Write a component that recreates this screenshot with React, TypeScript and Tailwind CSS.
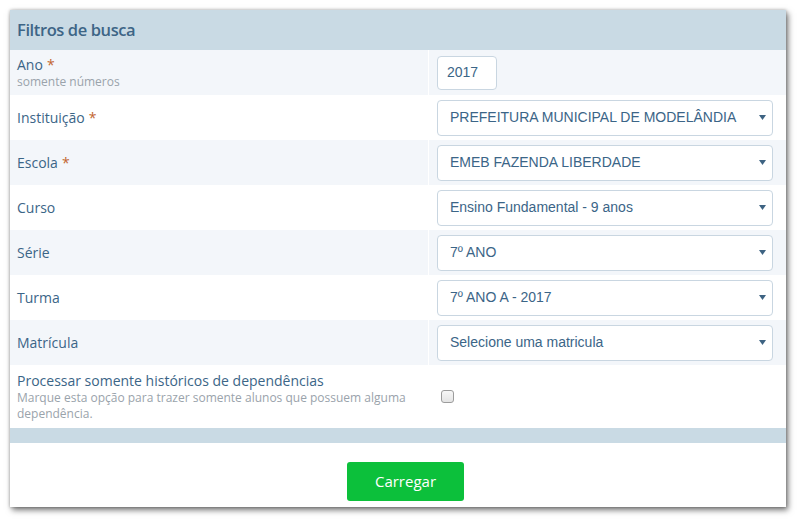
const label = 'text-[14px] leading-[18px] text-[#3b6587]';
const helper = 'text-[12px] leading-[16px] text-[#9aa3ab]';

type Field = {
  name: string;
  required?: boolean;
  value: string;
};

const selects: Field[] = [
  { name: 'Instituição', required: true, value: 'PREFEITURA MUNICIPAL DE MODELÂNDIA' },
  { name: 'Escola', required: true, value: 'EMEB FAZENDA LIBERDADE' },
  { name: 'Curso', value: 'Ensino Fundamental - 9 anos' },
  { name: 'Série', value: '7º ANO' },
  { name: 'Turma', value: '7º ANO A - 2017' },
  { name: 'Matrícula', value: 'Selecione uma matricula' },
];

function Star() {
  return <span className="text-[#c2652f] ml-[4px]">*</span>;
}

function Row({ striped, height, children, control }: { striped: boolean; height: string; children: React.ReactNode; control: React.ReactNode }) {
  return (
    <div className={`flex ${height} ${striped ? 'bg-[#f3f6fa]' : 'bg-white'}`}>
      <div className="w-[418px] pl-[7px] pr-[8px] flex flex-col justify-center">{children}</div>
      <div className="w-px bg-white" />
      <div className="flex-1 pl-[8px] pr-[13px] flex items-center">{control}</div>
    </div>
  );
}

function Select({ value }: { value: string }) {
  return (
    <div className="w-full h-[36px] bg-white border border-[#c9d6e1] rounded-[4px] flex items-center pl-[12px] pr-[6px] font-['Liberation_Sans',Arial,sans-serif] text-[14px] text-[#3b6587]">
      <span className="flex-1">{value}</span>
      <svg width="7" height="5" viewBox="0 0 7 5">
        <path d="M0 0h7L3.5 5z" fill="#3d6382" />
      </svg>
    </div>
  );
}

export default function App() {
  return (
    <div className="w-[802px] h-[523px] bg-white pt-[10px] pl-[10px] font-['Open_Sans',sans-serif]">
      <div className="w-[776px] h-[497px] bg-white flex flex-col shadow-[2px_3px_6px_rgba(0,0,0,0.55),0_0_3px_rgba(0,0,0,0.25)]">
        <div className="h-[40px] bg-[#c9dae4] pl-[7px] flex items-center text-[16.5px] tracking-[-0.4px] font-semibold text-[#3d6586]">
          Filtros de busca
        </div>

        <Row
          striped
          height="h-[45px]"
          control={
            <div className="w-[60px] h-[34px] bg-white border border-[#c9d6e1] rounded-[4px] flex items-center pl-[9px] font-['Liberation_Sans',Arial,sans-serif] text-[14px] text-[#3b6587]">
              2017
            </div>
          }
        >
          <div className={label}>
            Ano
            <Star />
          </div>
          <div className={helper}>somente números</div>
        </Row>

        {selects.map((f, i) => (
          <Row key={f.name} striped={i % 2 === 1} height="h-[45px]" control={<Select value={f.value} />}>
            <div className={label}>
              {f.name}
              {f.required && <Star />}
            </div>
          </Row>
        ))}

        <Row
          striped={false}
          height="h-[63px]"
          control={
            <div className="ml-[4px] w-[13px] h-[13px] rounded-[3px] border border-[#9c9c9c] bg-gradient-to-b from-[#f7f7f7] to-[#e4e4e4]" />
          }
        >
          <div className={label}>Processar somente históricos de dependências</div>
          <div className={helper}>
            Marque esta opção para trazer somente alunos que possuem alguma
            <br />
            dependência.
          </div>
        </Row>

        <div className="h-[15px] bg-[#c9dae4]" />

        <div className="flex-1 pl-[337px] pt-[19px]">
          <button className="w-[117px] h-[39px] bg-[#0cc03b] rounded-[3px] text-white text-[15px]">Carregar</button>
        </div>
      </div>
    </div>
  );
}
